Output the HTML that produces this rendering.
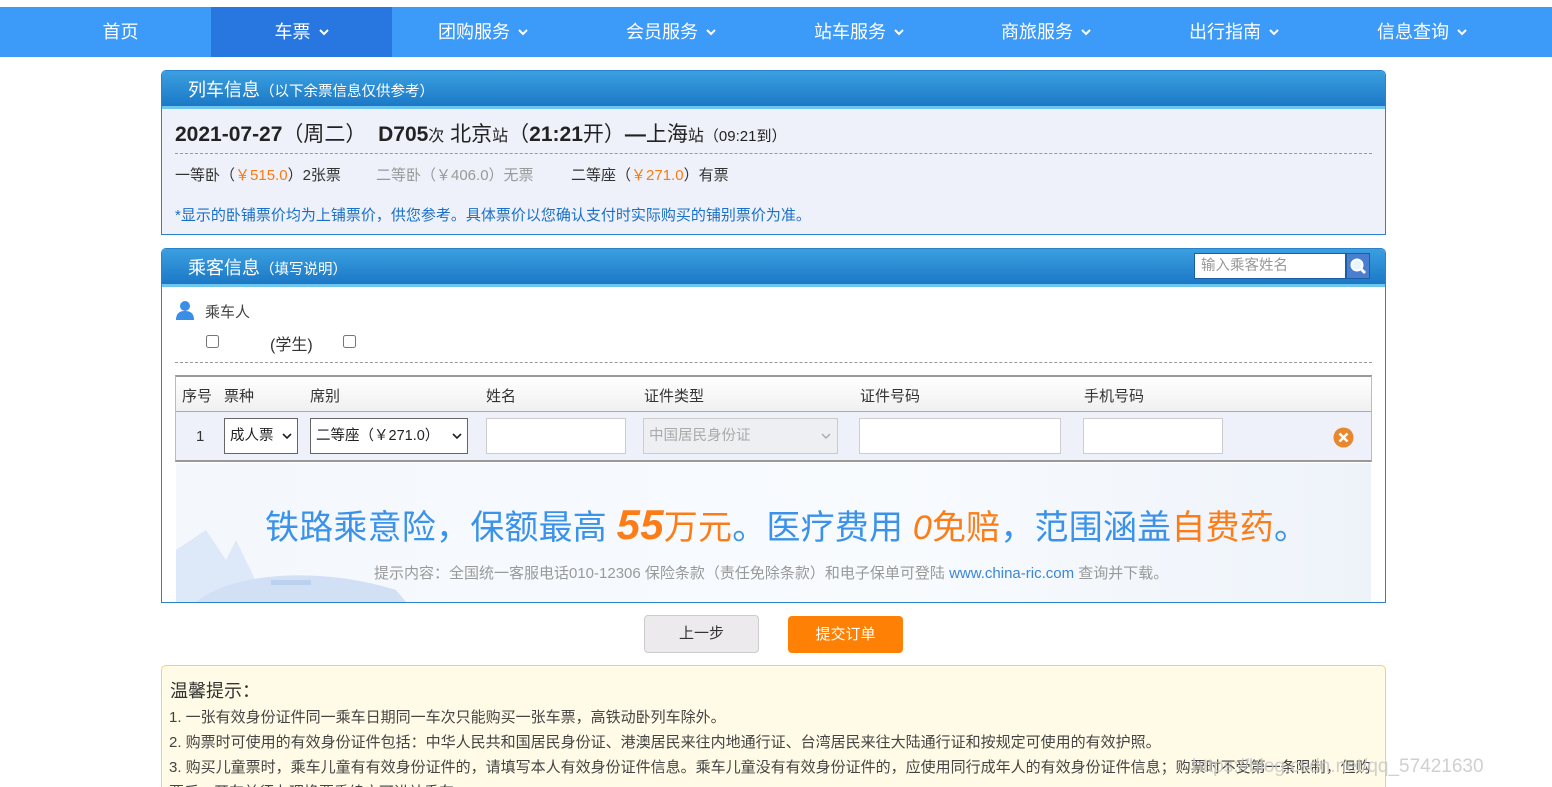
<!DOCTYPE html>
<html><head><meta charset="utf-8">
<style>
*{box-sizing:border-box;margin:0;padding:0}
html,body{width:1552px;height:787px;overflow:hidden}
body{background:#fff;font-family:"Liberation Sans","Noto Sans CJK SC",sans-serif;font-size:15px;color:#333;position:relative}
.abs{position:absolute}
.nav{position:absolute;left:0;top:7px;width:1552px;height:50px;background:#3c9af8}
.nav .it{position:absolute;top:0;height:50px;line-height:50px;color:#fff;font-size:18px;text-align:center;white-space:nowrap}
.nav .it svg{margin-left:8px;vertical-align:2px}
.panel{position:absolute;left:161px;width:1225px;border:1px solid #2b82cc;border-radius:5px 5px 0 0;overflow:hidden}
.ph{height:38px;background:linear-gradient(#3b9fe0,#1b78c6);border-bottom:3px solid #6cc6ee;color:#fff;font-size:18px;line-height:38px;padding-left:26px}
.ph small{font-size:14.5px}
.dash{position:absolute;border-top:1px dashed #999;height:0}
input[type=checkbox]{width:13px;height:13px}
.box{position:absolute;border:1px solid #aaa;background:#fff;height:36px;top:418px;font-size:14.5px;line-height:34px;padding-left:5px;color:#222}
</style></head><body>
<div class="nav">
<div class="it" style="left:30px;width:181px">首页</div>
<div class="it" style="left:211px;width:181px;background:#2877e0">车票<svg width="10" height="7" viewBox="0 0 10 7"><path d="M1 1l4 4 4-4" stroke="#fff" stroke-width="2" fill="none"/></svg></div>
<div class="it" style="left:392px;width:182px">团购服务<svg width="10" height="7" viewBox="0 0 10 7"><path d="M1 1l4 4 4-4" stroke="#fff" stroke-width="2" fill="none"/></svg></div>
<div class="it" style="left:580px;width:182px">会员服务<svg width="10" height="7" viewBox="0 0 10 7"><path d="M1 1l4 4 4-4" stroke="#fff" stroke-width="2" fill="none"/></svg></div>
<div class="it" style="left:768px;width:182px">站车服务<svg width="10" height="7" viewBox="0 0 10 7"><path d="M1 1l4 4 4-4" stroke="#fff" stroke-width="2" fill="none"/></svg></div>
<div class="it" style="left:955px;width:182px">商旅服务<svg width="10" height="7" viewBox="0 0 10 7"><path d="M1 1l4 4 4-4" stroke="#fff" stroke-width="2" fill="none"/></svg></div>
<div class="it" style="left:1143px;width:182px">出行指南<svg width="10" height="7" viewBox="0 0 10 7"><path d="M1 1l4 4 4-4" stroke="#fff" stroke-width="2" fill="none"/></svg></div>
<div class="it" style="left:1331px;width:182px">信息查询<svg width="10" height="7" viewBox="0 0 10 7"><path d="M1 1l4 4 4-4" stroke="#fff" stroke-width="2" fill="none"/></svg></div>
</div>

<div class="panel" style="top:70px;height:165px;background:#eef1f9">
<div class="ph">列车信息<small>（以下余票信息仅供参考）</small></div>
</div>
<div class="abs" style="left:175px;top:118px;font-size:21px;color:#222;white-space:nowrap"><b>2021-07-27</b>（周二） &nbsp;<b>D705</b><span style="font-size:16px">次</span> 北京<span style="font-size:16px">站</span>（<b>21:21</b>开）<b>—</b>上海<span style="font-size:16px">站</span><span style="font-size:15px">（09:21到）</span></div>
<div class="dash" style="left:175px;top:153px;width:1197px"></div>
<div class="abs" style="left:175px;top:164px;white-space:nowrap">一等卧（<span style="color:#fc7a10">￥515.0</span>）2张票</div>
<div class="abs" style="left:376px;top:164px;white-space:nowrap;color:#999">二等卧（￥406.0）无票</div>
<div class="abs" style="left:571px;top:164px;white-space:nowrap">二等座（<span style="color:#fc7a10">￥271.0</span>）有票</div>
<div class="abs" style="left:175px;top:204px;white-space:nowrap;color:#1a70c8">*显示的卧铺票价均为上铺票价，供您参考。具体票价以您确认支付时实际购买的铺别票价为准。</div>

<div class="panel" style="top:248px;height:355px;background:#fff">
<div class="ph">乘客信息<small>（填写说明）</small></div>
</div>
<div class="abs" style="left:1194px;top:253px;width:152px;height:26px;border:1px solid #1a5ea8;background:#fff;color:#999;font-size:14.5px;line-height:24px;padding-left:6px">输入乘客姓名</div>
<div class="abs" style="left:1346px;top:253px;width:24px;height:26px;background:#4a7fd0;border:1px solid #1a5ea8"><svg width="22" height="24" viewBox="0 0 22 24"><circle cx="10" cy="11" r="5.5" fill="#e8f4ff" stroke="#fff" stroke-width="2"/><path d="M14 15l4 4" stroke="#fff" stroke-width="3"/></svg></div>

<svg class="abs" style="left:175px;top:300px" width="20" height="20" viewBox="0 0 20 20"><circle cx="10" cy="6" r="5" fill="#3a8ee6"/><path d="M1 20c0-7 4-9 9-9s9 2 9 9z" fill="#3a8ee6"/></svg>
<div class="abs" style="left:205px;top:301px;color:#444">乘车人</div>
<input type="checkbox" class="abs" style="left:206px;top:335px">
<div class="abs" style="left:270px;top:331px;font-size:16px">(学生)</div>
<input type="checkbox" class="abs" style="left:343px;top:335px">
<div class="dash" style="left:175px;top:362px;width:1197px"></div>

<div class="abs" style="left:175px;top:375px;width:1197px;height:87px;border:1px solid #bbb;border-top:2px solid #999;border-bottom:2px solid #999;background:#eef1f9"></div>
<div class="abs" style="left:176px;top:377px;width:1195px;height:35px;background:linear-gradient(#fff,#f0f0f0);border-bottom:1px solid #aaa"></div>
<div class="abs" style="left:182px;top:385px">序号</div>
<div class="abs" style="left:224px;top:385px">票种</div>
<div class="abs" style="left:310px;top:385px">席别</div>
<div class="abs" style="left:486px;top:385px">姓名</div>
<div class="abs" style="left:644px;top:385px">证件类型</div>
<div class="abs" style="left:860px;top:385px">证件号码</div>
<div class="abs" style="left:1084px;top:385px">手机号码</div>
<div class="abs" style="left:196px;top:428px">1</div>
<div class="box" style="left:224px;width:74px;border-color:#666">成人票<svg style="position:absolute;right:5px;top:14px" width="10" height="7" viewBox="0 0 10 7"><path d="M1 1l4 4 4-4" stroke="#222" stroke-width="1.6" fill="none"/></svg></div>
<div class="box" style="left:310px;width:158px;border-color:#666">二等座（￥271.0）<svg style="position:absolute;right:5px;top:14px" width="10" height="7" viewBox="0 0 10 7"><path d="M1 1l4 4 4-4" stroke="#222" stroke-width="1.6" fill="none"/></svg></div>
<div class="box" style="left:486px;width:140px;border-color:#ccc"></div>
<div class="box" style="left:643px;width:195px;border-color:#ccc;background:#eeeff2;color:#aaa">中国居民身份证<svg style="position:absolute;right:6px;top:14px" width="10" height="7" viewBox="0 0 10 7"><path d="M1 1l4 4 4-4" stroke="#aaa" stroke-width="1.4" fill="none"/></svg></div>
<div class="box" style="left:859px;width:202px;border-color:#ccc"></div>
<div class="box" style="left:1083px;width:140px;border-color:#ccc"></div>
<svg class="abs" style="left:1333px;top:427px" width="21" height="21" viewBox="0 0 21 21"><circle cx="10.5" cy="10.5" r="10" fill="#e8872e"/><path d="M6.5 6.5l8 8M14.5 6.5l-8 8" stroke="#fff" stroke-width="2.6"/></svg>

<div class="abs" style="left:176px;top:463px;width:1195px;height:139px;background:linear-gradient(90deg,#f4f8fd,#f8fbfe 60%,#eef3fa)"></div>
<svg class="abs" style="left:176px;top:520px" width="260" height="82" viewBox="0 0 260 82"><path d="M0 30 L30 10 L50 40 L60 20 L90 82 L0 82z" fill="#dde8f8"/><path d="M20 82 C60 50 150 48 220 70 L230 82z" fill="#d2e0f6"/><rect x="95" y="60" width="40" height="5" fill="#bcd0ef"/></svg>
<div class="abs" style="left:265px;top:500px;font-size:34px;color:#3a92ea;white-space:nowrap;letter-spacing:0.2px">铁路乘意险，保额最高 <span style="color:#fc7d17;font-style:italic;font-weight:bold;font-size:42px;line-height:34px">55</span><span style="color:#fc7d17">万元</span>。医疗费用 <span style="color:#fc7d17;font-style:italic">0</span><span style="color:#fc7d17">免赔</span>，范围涵盖<span style="color:#fc7d17">自费药</span>。</div>
<div class="abs" style="left:374px;top:562px;font-size:15px;color:#999;white-space:nowrap">提示内容：全国统一客服电话010-12306 保险条款（责任免除条款）和电子保单可登陆 <span style="color:#3a86d8">www.china-ric.com</span> 查询并下载。</div>

<div class="abs" style="left:644px;top:615px;width:115px;height:38px;background:#eceaed;border:1px solid #ccc;border-radius:4px;text-align:center;line-height:36px">上一步</div>
<div class="abs" style="left:788px;top:616px;width:115px;height:37px;background:#fe8004;border-radius:4px;text-align:center;line-height:37px;color:#fff">提交订单</div>

<div class="abs" style="left:161px;top:665px;width:1225px;height:140px;background:#fffbe6;border:1px solid #f3d75b;border-radius:5px"></div>
<div class="abs" style="left:170px;top:677px;font-size:18px;color:#333">温馨提示：</div>
<div class="abs" style="left:169px;top:706px;color:#444;white-space:nowrap">1. 一张有效身份证件同一乘车日期同一车次只能购买一张车票，高铁动卧列车除外。</div>
<div class="abs" style="left:169px;top:731px;color:#444;white-space:nowrap">2. 购票时可使用的有效身份证件包括：中华人民共和国居民身份证、港澳居民来往内地通行证、台湾居民来往大陆通行证和按规定可使用的有效护照。</div>
<div class="abs" style="left:169px;top:756px;color:#444;white-space:nowrap">3. 购买儿童票时，乘车儿童有有效身份证件的，请填写本人有效身份证件信息。乘车儿童没有有效身份证件的，应使用同行成年人的有效身份证件信息；购票时不受第一条限制，但购</div>
<div class="abs" style="left:169px;top:781px;color:#444;white-space:nowrap">票后，开车前须办理换票手续方可进站乘车。</div>
<div class="abs" style="left:1192px;top:756px;color:rgba(200,200,200,.85);font-size:19px;white-space:nowrap">https://blog.csdn.net/qq_57421630</div>
</body></html>
